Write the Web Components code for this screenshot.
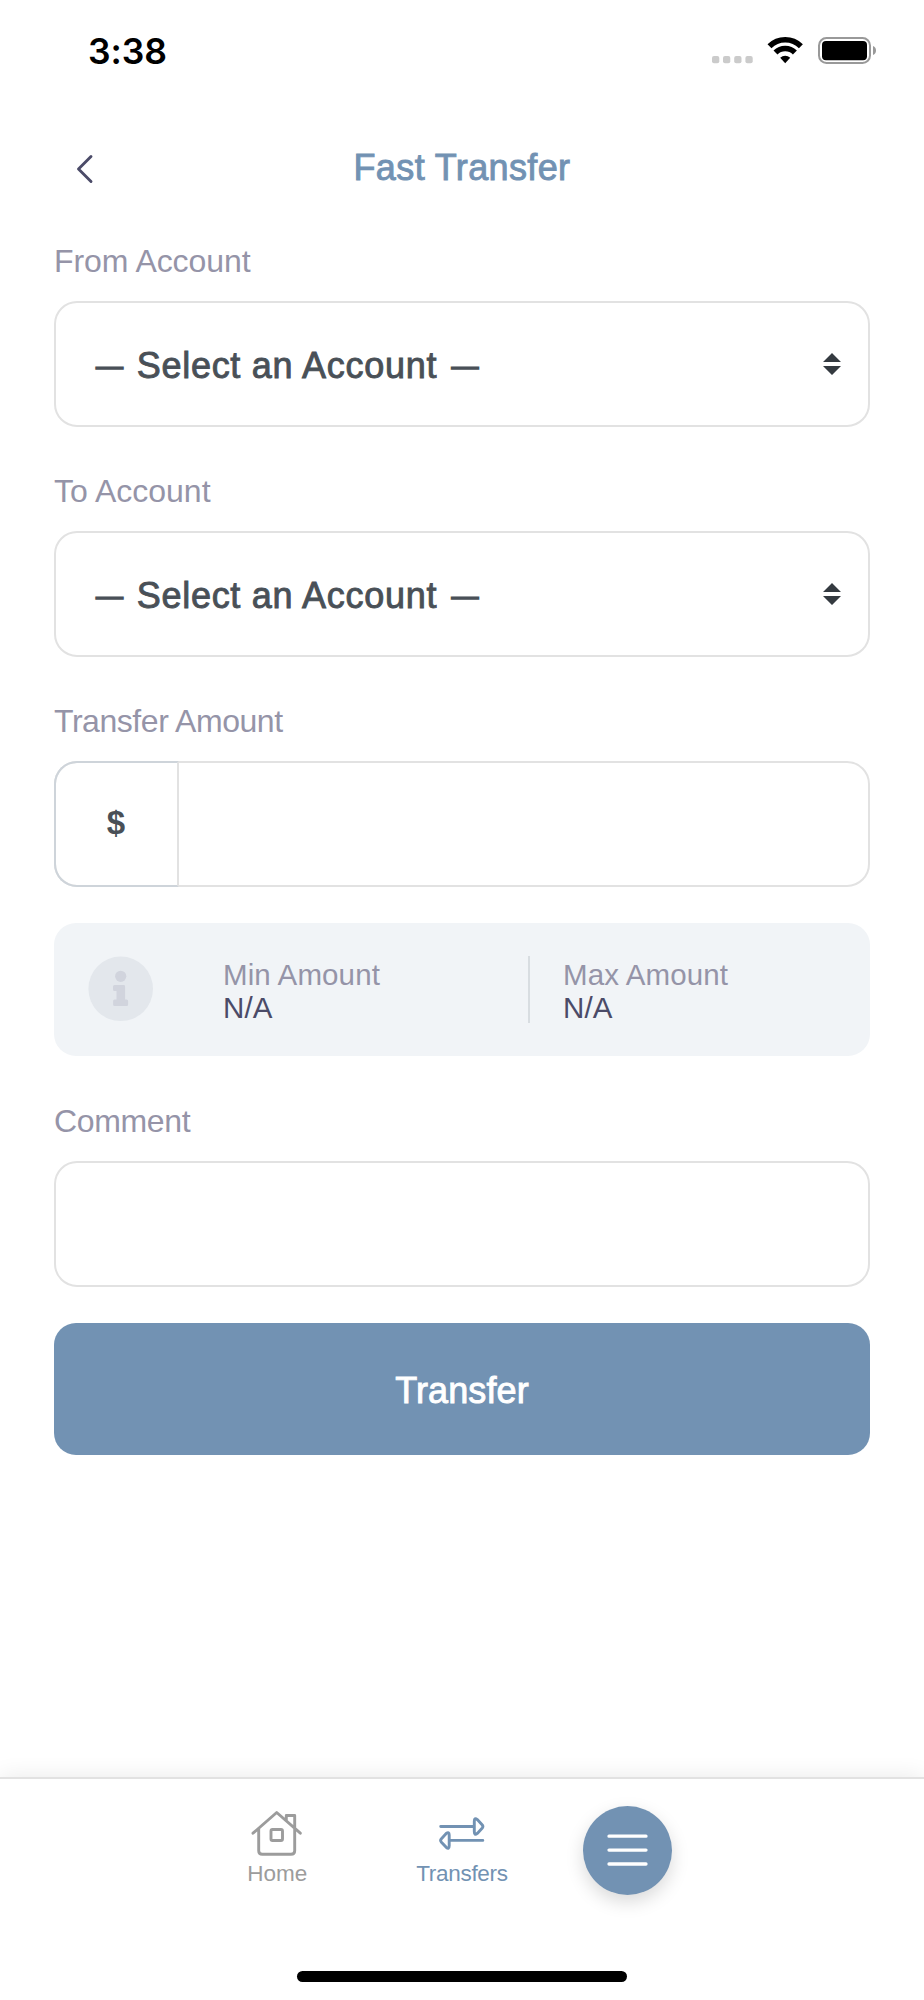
<!DOCTYPE html>
<html lang="en">
<head>
<meta charset="utf-8">
<title>Fast Transfer</title>
<style>
html,body{margin:0;background:#fff;height:2000px;overflow:hidden}
body{font-family:"Liberation Sans",Arial,sans-serif}
</style>
</head>
<body>
<transfer-app></transfer-app>
<script>
const define = (name, html) => {
  const t = document.createElement('template');
  t.innerHTML = html;
  customElements.define(name, class extends HTMLElement {
    constructor() {
      super();
      this.attachShadow({mode: 'open'}).append(t.content.cloneNode(true));
    }
  });
};

define('status-bar', `
<style>
:host{display:flex;height:100px;box-sizing:border-box;padding:28px 46px 0 88px;justify-content:space-between;align-items:flex-start}
.time{font:600 35.5px/44px Inter,sans-serif;color:#000;letter-spacing:-.05px;padding-top:1.500px}
svg{display:block;margin-top:4px}
</style>
<span class="time">3:38</span>
<svg width="170" height="40" viewBox="708 32 170 40">
  <g fill="#cbcbcb"><rect x="712" y="56" width="7.3" height="7.3" rx="2"/><rect x="723" y="56" width="7.3" height="7.3" rx="2"/><rect x="734.2" y="56" width="7.3" height="7.3" rx="2"/><rect x="745.4" y="56" width="7.3" height="7.3" rx="2"/></g>
  <g fill="none" stroke="#000" stroke-width="5.6"><path d="M769.5 46.2a22.3 22.3 0 0 1 31.4 0"/><path d="M775.5 52.6a13.7 13.7 0 0 1 19.4 0"/></g>
  <path d="M785.2 63.2l-5-5.4a7.2 7.2 0 0 1 10 0z"/>
  <rect x="819" y="38" width="51" height="25" rx="7.5" fill="none" stroke="#999" stroke-width="2"/>
  <rect x="822" y="41" width="45" height="19.2" rx="4"/>
  <path d="M873 46v9c4-1.5 4-7.500 0-9z" fill="#999"/>
</svg>`);

define('page-header', `
<style>
:host{display:grid;grid-template-columns:100px 1fr 100px;height:141px;box-sizing:border-box;padding-top:44px;align-items:start}
svg{display:block;margin:9px 0 0 71px}
h1{margin:0;padding-top:1.500px;text-align:center;font-size:36px;line-height:44px;font-weight:400;letter-spacing:.38px;color:#7292b3;-webkit-text-stroke:.9px #7292b3}
</style>
<svg width="24" height="32" viewBox="71 153 24 32"><path d="M91 156.500L78.500 169 91 181.500" fill="none" stroke="#4b4b68" stroke-width="2.900" stroke-linecap="round" stroke-linejoin="round"/></svg>
<h1><slot></slot></h1>`);

define('form-field', `
<style>
:host{display:block}
.label{height:40px;line-height:40px;font-size:32px;color:#9594a8;margin-bottom:20px;letter-spacing:var(--label-spacing,0)}
.box{display:flex;align-items:stretch;height:126px;box-sizing:border-box;border:2px solid #e2e2e2;border-radius:23px;background:#fff}
</style>
<div class="label"><slot name="label"></slot></div>
<div class="box"><slot></slot></div>`);

define('select-value', `
<style>
:host{display:flex;flex:1;align-items:center;justify-content:space-between;padding:3px 27px 0 40px;color:#495057;font-size:36px;-webkit-text-stroke:.9px #495057;letter-spacing:.72px;white-space:pre}
.dash{font-size:27px;letter-spacing:0;position:relative;top:-2.500px;-webkit-text-stroke-width:1.500px}
.dash.a{margin-right:3px}.dash.b{margin-left:3.500px}
svg{display:block;margin-top:-4px}
</style>
<span><span class="dash a">—</span> Select an Account <span class="dash b">—</span></span>
<svg width="18" height="22" viewBox="0 0 18 22"><path d="M0 9L9 0l9 9zM0 13h18l-9 9z" fill="#343a40"/></svg>`);

define('money-input', `
<style>
:host{display:flex;flex:1}
.prefix{width:125px;box-sizing:border-box;margin:-2px 0 -2px -2px;border:2px solid #ced4da;border-right-color:#e2e2e2;border-radius:23px 0 0 23px;display:flex;align-items:center;justify-content:center;font-size:33px;font-weight:700;color:#495057;padding:0 1px 2px 0}
</style>
<span class="prefix">$</span>`);

define('amount-limit', `
<style>
:host{display:block;font-size:29.500px;line-height:33.400px;letter-spacing:.12px}
.k{color:#9594a8}.v{color:#4b4b68}
</style>
<div class="k"><slot name="name"></slot></div><div class="v"><slot></slot></div>`);

define('limits-panel', `
<style>
:host{display:grid;grid-template-columns:169px 304px 1fr;height:133px;background:#f1f4f7;border-radius:22px;margin:36px 0 45px}
svg{margin:33px 0 0 34px}
amount-limit{margin-top:34.500px}
.max{margin:33px 0 0 1px;border-left:2px solid #d8dde1;height:67px;padding-left:33px}
.max amount-limit{margin-top:1.500px}
</style>
<svg width="66" height="66" viewBox="88 956 66 66"><circle cx="120.700" cy="988.800" r="32.300" fill="#e3e7ec"/><g fill="#d1d4dd"><circle cx="120.700" cy="976.300" r="5.600"/><path d="M114.500 985h9.200q1.400 0 1.400 1.400v13.200h1.500q1.500 0 1.500 1.500v3.400q0 1.500-1.500 1.500h-12q-1.500 0-1.500-1.500v-3.400q0-1.500 1.500-1.500h1.900v-8.600h-2q-1.500 0-1.500-1.500v-3q0-1.500 1.500-1.500z"/></g></svg>
<amount-limit><span slot="name">Min Amount</span>N/A</amount-limit>
<div class="max"><amount-limit><span slot="name">Max Amount</span>N/A</amount-limit></div>`);

define('primary-button', `
<style>
:host{display:block;margin-top:36px}
button{display:block;width:100%;height:132px;border:0;border-radius:22px;background:#7292b3;color:#fff;font:400 36px/44px "Liberation Sans",Arial,sans-serif;letter-spacing:.1px;-webkit-text-stroke:.9px #fff;padding:3px 0 0}
</style>
<button><slot></slot></button>`);

define('transfer-form', `
<style>
:host{display:block;padding:0 54px}
form-field.pitch{margin-bottom:44px}
form-field.amount{--label-spacing:-.45px}
form-field.comment{--label-spacing:-.35px}
form-field.from{--label-spacing:-.08px}
</style>
<form-field class="pitch from"><span slot="label">From Account</span><select-value></select-value></form-field>
<form-field class="pitch"><span slot="label">To Account</span><select-value></select-value></form-field>
<form-field class="amount"><span slot="label">Transfer Amount</span><money-input></money-input></form-field>
<limits-panel></limits-panel>
<form-field class="comment"><span slot="label">Comment</span></form-field>
<primary-button>Transfer</primary-button>`);

define('nav-item', `
<style>
:host{display:flex;flex-direction:column;align-items:center;font-size:22.500px;line-height:28px}
</style>
<slot name="icon"></slot><span><slot></slot></span>`);

define('bottom-nav', `
<style>
:host{display:grid;grid-template-columns:repeat(5,1fr);grid-template-rows:1fr auto;height:223px;box-sizing:border-box;border-top:2px solid #e2e2e2;background:#fff;box-shadow:0 0 22px rgba(0,0,0,.09)}
nav-item{padding-top:30px}
.home{grid-column:2;color:#9c9c9c}
.move{grid-column:3;color:#7292b3;letter-spacing:-.3px}
svg{display:block}
nav-item svg{margin-bottom:1px;fill:none;stroke:currentColor;stroke-width:2.900;stroke-linecap:round;stroke-linejoin:round}
.menu{grid-column:4;width:89px;height:89px;margin:27px 0 0 28.500px;border:0;padding:0 0 2px;box-sizing:border-box;border-radius:50%;background:#7292b3;box-shadow:0 7px 18px rgba(0,0,0,.15);display:flex;align-items:center;justify-content:center}
.bar{grid-column:1/-1;justify-self:center;width:330px;height:11px;border-radius:6px;background:#000;margin-bottom:18px}
</style>
<nav-item class="home"><svg slot="icon" width="54" height="50" viewBox="250 1809 54 50"><path d="M253 1833.200L276.700 1812.500 300.300 1833.200M258.700 1829V1850.700Q258.700 1854.300 262.300 1854.300H291Q294.700 1854.300 294.700 1850.700V1815.500H286.300V1820M272.500 1829.500H281Q282.500 1829.500 282.500 1831V1839Q282.500 1840.500 281 1840.500H272.500Q271 1840.500 271 1839V1831Q271 1829.500 272.500 1829.500Z"/></svg>Home</nav-item>
<nav-item class="move"><svg slot="icon" width="54" height="50" viewBox="434.500 1809 54 50"><path d="M440.200 1826.500H473.500M473.800 1821.200Q473.800 1817.200 476.800 1819.600L481.800 1825Q483 1826.500 481.800 1828L476.800 1833.400Q473.800 1835.800 473.800 1831.800ZM482.300 1840.400H449M448.700 1835.100Q448.700 1831.100 445.700 1833.500L440.700 1838.900Q439.500 1840.400 440.700 1841.900L445.700 1847.300Q448.700 1849.700 448.700 1845.700Z"/></svg>Transfers</nav-item>
<button class="menu" aria-label="Menu"><svg width="41" height="34" viewBox="0 0 41 34"><path d="M2 3.200h37M2 17.100h37M2 31h37" stroke="#fff" stroke-width="3.300" stroke-linecap="round"/></svg></button>
<div class="bar"></div>`);

define('transfer-app', `
<style>:host{display:flex;flex-direction:column;width:924px;height:2000px;background:#fff}bottom-nav{margin-top:auto}</style>
<status-bar></status-bar>
<page-header>Fast Transfer</page-header>
<transfer-form></transfer-form>
<bottom-nav></bottom-nav>`);
</script>
</body>
</html>
